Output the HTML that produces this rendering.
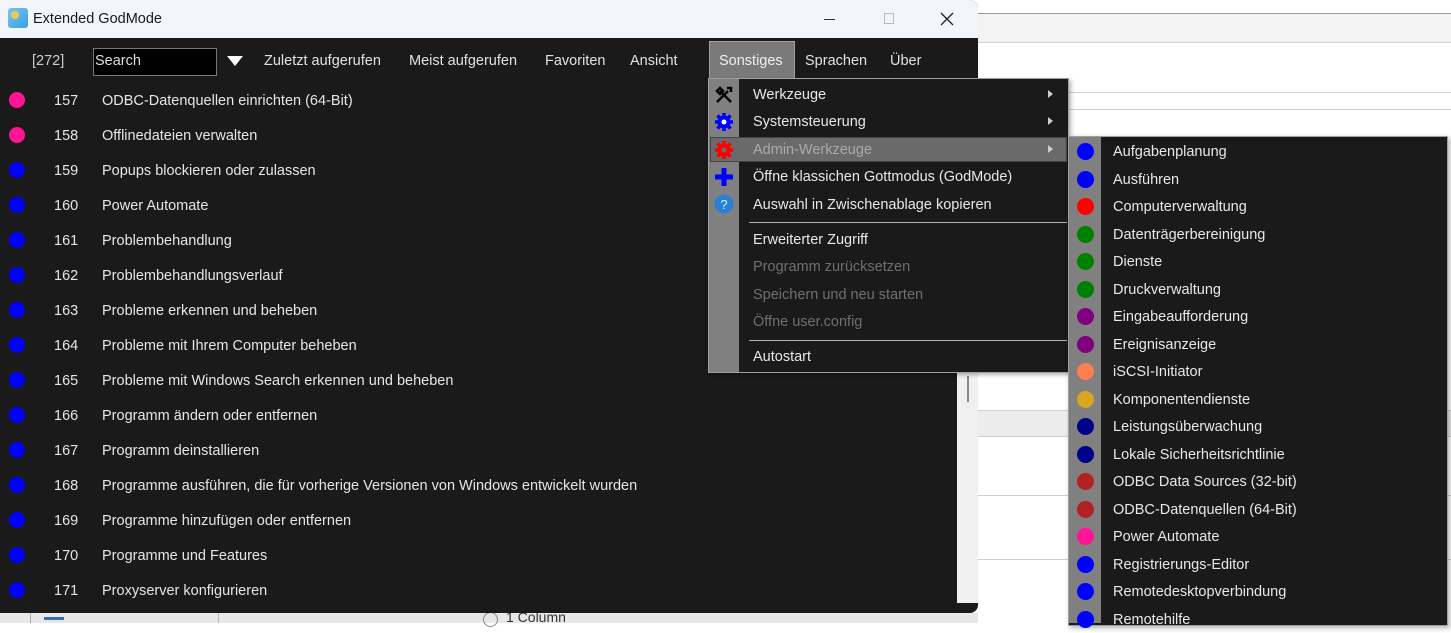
<!DOCTYPE html>
<html><head><meta charset="utf-8"><style>
*{margin:0;padding:0;box-sizing:border-box}
body{width:1451px;height:623px;overflow:hidden;background:#fff;font-family:"Liberation Sans",sans-serif;font-size:14.5px;position:relative}
.a{position:absolute;white-space:nowrap}
.hl{position:absolute;left:978px;right:0;height:1px;background:#d0d0d0}
.dot{position:absolute;width:16px;height:16px;border-radius:50%}
.row{position:absolute;left:0;width:957px;height:35px;color:#e6e6e6}
.row .dot{left:9px;top:9px}
.row .n{position:absolute;left:54px;top:10px}
.row .t{position:absolute;left:102px;top:10px}
.mi{position:absolute;left:753px;color:#e8e8e8}
.dis{color:#6f6f6f}
.si{position:absolute;left:1069px;width:378px;height:27.5px}
.si .dot{left:8px;top:5px;width:17px;height:17px}
.si span{position:absolute;left:44px;top:6px;color:#e8e8e8}
.arr{position:absolute;left:1048px;width:0;height:0;border-left:5px solid #ccc;border-top:4px solid transparent;border-bottom:4px solid transparent}
</style></head><body>
<div class="hl" style="top:13px;background:#999"></div>
<div class="a" style="left:978px;top:14px;right:0;height:28px;background:#f3f3f3"></div>
<div class="hl" style="top:42px"></div>
<div class="hl" style="top:92px"></div>
<div class="hl" style="top:109px"></div>
<div class="a" style="left:978px;top:410px;right:0;height:27px;background:#ececec"></div>
<div class="hl" style="top:410px"></div>
<div class="hl" style="top:436px"></div>
<div class="hl" style="top:495px"></div>
<div class="hl" style="top:559px"></div>
<div class="a" style="left:0;top:613px;width:978px;height:10px;background:#e8e8e8"></div>
<div class="a" style="left:30px;top:613px;width:1px;height:10px;background:#aaa"></div>
<div class="a" style="left:218px;top:613px;width:1px;height:10px;background:#bbb"></div>
<div class="a" style="left:44px;top:617px;width:20px;height:3px;background:#3a6ea5"></div>
<div class="a" style="left:483px;top:612px;width:15px;height:15px;border:1px solid #888;border-radius:50%"></div>
<div class="a" style="left:506px;top:609px;color:#333;font-size:14px">1 Column</div>

<div class="a" style="left:0;top:0;width:978px;height:613px;background:#1a1a1a;border-radius:0 8px 8px 0;overflow:hidden">
  <div class="a" style="left:0;top:0;width:978px;height:38px;background:#f2f5fa"></div>
  <div class="a" style="left:8px;top:8px;width:20px;height:20px;background:linear-gradient(135deg,#7ec4ef,#3b9ee0);border-radius:3px"></div>
  <div class="a" style="left:11px;top:11px;width:8px;height:8px;background:#f2c94c;border-radius:50%"></div>
  <div class="a" style="left:33px;top:11px;color:#1a1a1a;font-size:14.5px">Extended GodMode</div>
  <div class="a" style="left:824px;top:19px;width:11px;height:1px;background:#333"></div>
  <div class="a" style="left:884px;top:13px;width:10px;height:11px;border:1px solid #bbb"></div>
  <svg class="a" style="left:940px;top:12px" width="14" height="14"><path d="M1 1L13 13M13 1L1 13" stroke="#222" stroke-width="1.3"/></svg>

  <div class="a" style="left:32px;top:53px;color:#ccc">[272]</div>
  <div class="a" style="left:93px;top:48px;width:124px;height:28px;background:#000;border:1px solid #777;color:#ddd;padding:4px 1px">Search</div>
  <svg class="a" style="left:227px;top:56px" width="16" height="10"><path d="M0 0H16L8 10Z" fill="#fff"/></svg>
  <div class="a" style="left:264px;top:53px;color:#e2e2e2">Zuletzt aufgerufen</div>
  <div class="a" style="left:409px;top:53px;color:#e2e2e2">Meist aufgerufen</div>
  <div class="a" style="left:545px;top:53px;color:#e2e2e2">Favoriten</div>
  <div class="a" style="left:630px;top:53px;color:#e2e2e2">Ansicht</div>
  <div class="a" style="left:709px;top:41px;width:86px;height:38px;background:#7a7a7a;border:1px solid #a0a0a0;border-bottom:none"></div>
  <div class="a" style="left:719px;top:53px;color:#eee">Sonstiges</div>
  <div class="a" style="left:805px;top:53px;color:#e2e2e2">Sprachen</div>
  <div class="a" style="left:890px;top:53px;color:#e2e2e2">Über</div>

  <div class="a" style="left:957px;top:80px;width:21px;height:523px;background:#f0f0f0"></div>
  <div class="a" style="left:967px;top:376px;width:2px;height:26px;background:#888"></div>

  <div class="row" style="top:83px"><div class="dot" style="background:#ff1493"></div><span class="n">157</span><span class="t">ODBC-Datenquellen einrichten (64-Bit)</span></div>
  <div class="row" style="top:118px"><div class="dot" style="background:#ff1493"></div><span class="n">158</span><span class="t">Offlinedateien verwalten</span></div>
  <div class="row" style="top:153px"><div class="dot" style="background:#0000ff"></div><span class="n">159</span><span class="t">Popups blockieren oder zulassen</span></div>
  <div class="row" style="top:188px"><div class="dot" style="background:#0000ff"></div><span class="n">160</span><span class="t">Power Automate</span></div>
  <div class="row" style="top:223px"><div class="dot" style="background:#0000ff"></div><span class="n">161</span><span class="t">Problembehandlung</span></div>
  <div class="row" style="top:258px"><div class="dot" style="background:#0000ff"></div><span class="n">162</span><span class="t">Problembehandlungsverlauf</span></div>
  <div class="row" style="top:293px"><div class="dot" style="background:#0000ff"></div><span class="n">163</span><span class="t">Probleme erkennen und beheben</span></div>
  <div class="row" style="top:328px"><div class="dot" style="background:#0000ff"></div><span class="n">164</span><span class="t">Probleme mit Ihrem Computer beheben</span></div>
  <div class="row" style="top:363px"><div class="dot" style="background:#0000ff"></div><span class="n">165</span><span class="t">Probleme mit Windows Search erkennen und beheben</span></div>
  <div class="row" style="top:398px"><div class="dot" style="background:#0000ff"></div><span class="n">166</span><span class="t">Programm ändern oder entfernen</span></div>
  <div class="row" style="top:433px"><div class="dot" style="background:#0000ff"></div><span class="n">167</span><span class="t">Programm deinstallieren</span></div>
  <div class="row" style="top:468px"><div class="dot" style="background:#0000ff"></div><span class="n">168</span><span class="t">Programme ausführen, die für vorherige Versionen von Windows entwickelt wurden</span></div>
  <div class="row" style="top:503px"><div class="dot" style="background:#0000ff"></div><span class="n">169</span><span class="t">Programme hinzufügen oder entfernen</span></div>
  <div class="row" style="top:538px"><div class="dot" style="background:#0000ff"></div><span class="n">170</span><span class="t">Programme und Features</span></div>
  <div class="row" style="top:573px"><div class="dot" style="background:#0000ff"></div><span class="n">171</span><span class="t">Proxyserver konfigurieren</span></div>
</div>

<div class="a" style="left:708px;top:78px;width:361px;height:295px;background:#1a1a1a;border:1px solid #a0a0a0;box-shadow:2px 2px 4px rgba(0,0,0,.3)"></div>
<div class="a" style="left:709px;top:79px;width:30px;height:293px;background:#808080"></div>
<div class="a" style="left:710px;top:137px;width:357px;height:25px;background:#6a6a6a;border:1px solid #444"></div>
<svg class="a" style="left:714px;top:85px" width="20" height="20"><path d="M3 17L14 6M6 3l3 3-3 3-3-3zM17 17L6 6M13 3h4v4" stroke="#000" stroke-width="2.5" fill="none"/></svg>
<svg class="a" style="left:714px;top:112px" width="20" height="20"><circle cx="10" cy="10" r="6.5" fill="#0000ff"/><path d="M10 1v18M1 10h18M3.5 3.5l13 13M16.5 3.5l-13 13" stroke="#0000ff" stroke-width="3.5"/><circle cx="10" cy="10" r="2.5" fill="#fff"/></svg>
<svg class="a" style="left:714px;top:140px" width="20" height="20"><circle cx="10" cy="10" r="6.5" fill="#f00"/><path d="M10 1v18M1 10h18M3.5 3.5l13 13M16.5 3.5l-13 13" stroke="#f00" stroke-width="3.5"/><circle cx="10" cy="10" r="2.5" fill="#6a6a6a"/></svg>
<svg class="a" style="left:714px;top:167px" width="20" height="20"><path d="M10 1v18M1 10h18" stroke="#0000ff" stroke-width="5"/></svg>
<svg class="a" style="left:714px;top:194px" width="20" height="20"><circle cx="10" cy="10" r="9.5" fill="#2a7fd8"/><text x="10" y="15" font-size="13" fill="#cfe" text-anchor="middle" font-family="Liberation Sans">?</text></svg>
<div class="mi" style="top:87px">Werkzeuge</div><div class="arr" style="top:90px"></div>
<div class="mi" style="top:114px">Systemsteuerung</div><div class="arr" style="top:117px"></div>
<div class="mi" style="top:142px;color:#aaa">Admin-Werkzeuge</div><div class="arr" style="top:145px"></div>
<div class="mi" style="top:169px">Öffne klassichen Gottmodus (GodMode)</div>
<div class="mi" style="top:197px">Auswahl in Zwischenablage kopieren</div>
<div class="a" style="left:749px;top:222px;width:318px;height:1px;background:#b0b0b0"></div>
<div class="mi" style="top:232px">Erweiterter Zugriff</div>
<div class="mi dis" style="top:259px">Programm zurücksetzen</div>
<div class="mi dis" style="top:287px">Speichern und neu starten</div>
<div class="mi dis" style="top:314px">Öffne user.config</div>
<div class="a" style="left:749px;top:340px;width:318px;height:1px;background:#b0b0b0"></div>
<div class="mi" style="top:349px">Autostart</div>

<div class="a" style="left:1068px;top:136px;width:380px;height:490px;background:#1a1a1a;border:1px solid #a0a0a0;box-shadow:2px 2px 5px rgba(0,0,0,.3)"></div>
<div class="a" style="left:1069px;top:137px;width:32px;height:486px;background:#808080"></div>
<div class="si" style="top:138px"><div class="dot" style="background:#0000ff"></div><span>Aufgabenplanung</span></div>
<div class="si" style="top:165.5px"><div class="dot" style="background:#0000ff"></div><span>Ausführen</span></div>
<div class="si" style="top:193px"><div class="dot" style="background:#ff0000"></div><span>Computerverwaltung</span></div>
<div class="si" style="top:220.5px"><div class="dot" style="background:#008000"></div><span>Datenträgerbereinigung</span></div>
<div class="si" style="top:248px"><div class="dot" style="background:#008000"></div><span>Dienste</span></div>
<div class="si" style="top:275.5px"><div class="dot" style="background:#008000"></div><span>Druckverwaltung</span></div>
<div class="si" style="top:303px"><div class="dot" style="background:#800080"></div><span>Eingabeaufforderung</span></div>
<div class="si" style="top:330.5px"><div class="dot" style="background:#800080"></div><span>Ereignisanzeige</span></div>
<div class="si" style="top:358px"><div class="dot" style="background:#ff7f50"></div><span>iSCSI-Initiator</span></div>
<div class="si" style="top:385.5px"><div class="dot" style="background:#daa520"></div><span>Komponentendienste</span></div>
<div class="si" style="top:413px"><div class="dot" style="background:#00008b"></div><span>Leistungsüberwachung</span></div>
<div class="si" style="top:440.5px"><div class="dot" style="background:#00008b"></div><span>Lokale Sicherheitsrichtlinie</span></div>
<div class="si" style="top:468px"><div class="dot" style="background:#b22222"></div><span>ODBC Data Sources (32-bit)</span></div>
<div class="si" style="top:495.5px"><div class="dot" style="background:#b22222"></div><span>ODBC-Datenquellen (64-Bit)</span></div>
<div class="si" style="top:523px"><div class="dot" style="background:#ff1493"></div><span>Power Automate</span></div>
<div class="si" style="top:550.5px"><div class="dot" style="background:#0000ff"></div><span>Registrierungs-Editor</span></div>
<div class="si" style="top:578px"><div class="dot" style="background:#0000ff"></div><span>Remotedesktopverbindung</span></div>
<div class="si" style="top:605.5px"><div class="dot" style="background:#0000ff"></div><span>Remotehilfe</span></div>
</body></html>
